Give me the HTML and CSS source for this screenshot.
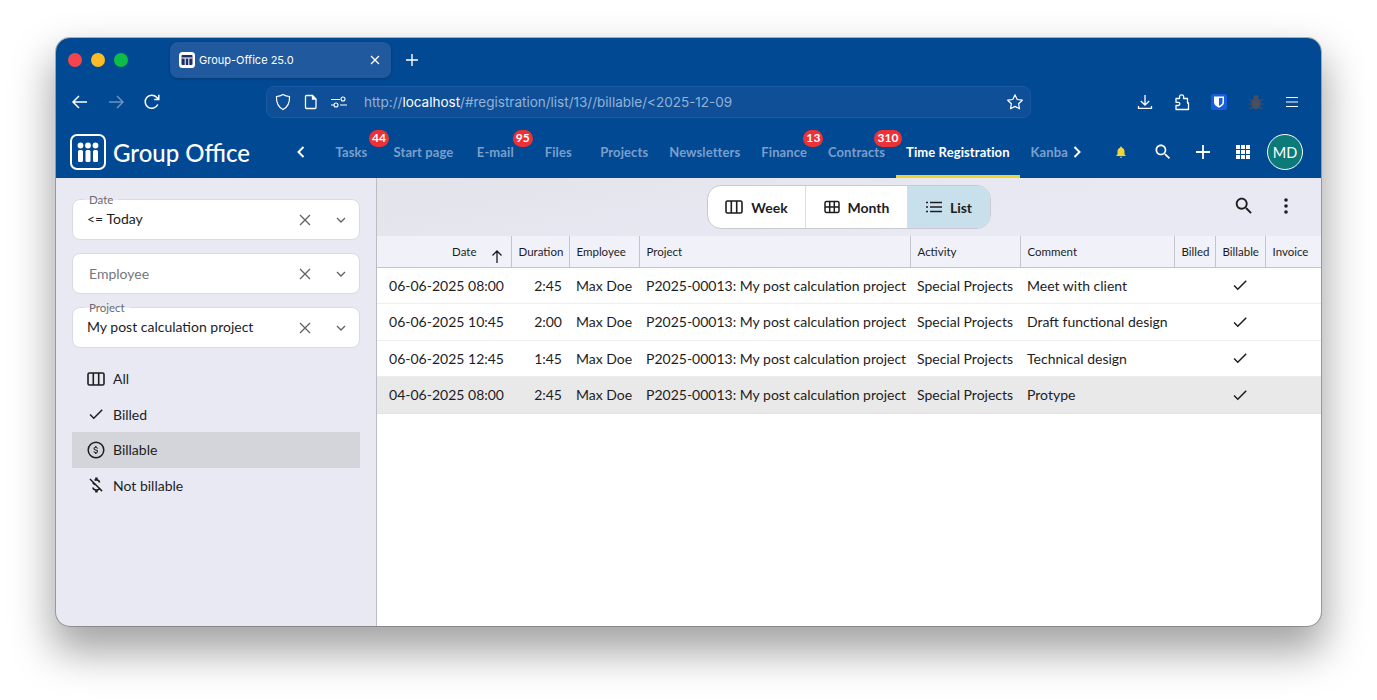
FILE: index.html
```html
<!DOCTYPE html>
<html lang="en">
<head>
  <meta charset="UTF-8" />
  <title>Group-Office 25.0</title>
  <link rel="stylesheet" href="styles.css">
</head>
<body>

<div class="window">

  <!-- browser chrome -->
  <div class="tabbar">
    <div class="lights">
      <span class="light red"></span>
      <span class="light yellow"></span>
      <span class="light green"></span>
    </div>
    <div class="tab">
      <svg class="favicon" width="16" height="16" viewBox="0 0 16 16"><rect width="16" height="16" rx="3.5" fill="#fff"/><rect x="2.5" y="3" width="11" height="10" rx="1" fill="#1c2f6b"/><path d="M2.5 6h11M6.2 6v7M9.8 6v7" stroke="#fff" stroke-width="1"/></svg>
      <span class="tab-title">Group-Office 25.0</span>
      <svg class="tab-close" width="10" height="10" viewBox="0 0 10 10"><path d="M1 1l8 8M9 1l-8 8" stroke="#fff" stroke-width="1.3"/></svg>
    </div>
    <svg class="tab-new" width="14" height="14" viewBox="0 0 14 14"><path d="M7 1v12M1 7h12" stroke="#fff" stroke-width="1.4"/></svg>
  </div>

  <div class="toolbar">
    <div class="toolbar-nav">
      <svg width="18" height="18" viewBox="0 0 18 18" fill="none" stroke="#fff" stroke-width="1.5"><path d="M16 9H2M8 3L2 9l6 6"/></svg>
      <svg class="dimmed" width="18" height="18" viewBox="0 0 18 18" fill="none" stroke="#fff" stroke-width="1.5"><path d="M2 9h14M10 3l6 6-6 6"/></svg>
      <svg width="18" height="18" viewBox="0 0 18 18" fill="none" stroke="#fff" stroke-width="1.5"><path d="M14.8 11.5A6.6 6.6 0 1 1 13.6 4.2l1.9 1.9M15.8 1.8v4.6h-4.6"/></svg>
    </div>
    <div class="urlbar">
      <svg width="16" height="18" viewBox="0 0 16 18" fill="none" stroke="#fff" stroke-width="1.2"><path d="M8 1.5c2 1.2 4 1.8 6.5 2 .3 6-1.5 10.500-6.500 13C3 14 1.200 9.500 1.500 3.500c2.500-.2 4.500-.8 6.500-2z"/></svg>
      <svg width="14" height="16" viewBox="0 0 14 16" fill="none" stroke="#fff" stroke-width="1.3"><path d="M2.500 1.500h6l3.500 3.500v8.500a1 1 0 0 1-1 1h-8.500a1 1 0 0 1-1-1v-11a1 1 0 0 1 1-1z"/><path d="M8.500 1.500v3.500h3.500" fill="#fff"/></svg>
      <svg width="16" height="12" viewBox="0 0 16 12" fill="none" stroke="#fff" stroke-width="1.100"><path d="M0 3.500h9M0 9h3M9 9h7"/><circle cx="12" cy="3" r="2"/><circle cx="5" cy="9" r="2"/></svg>
      <span class="url">http://<b>localhost</b>/#registration/list/13//billable/&lt;2025-12-09</span>
      <svg class="star" width="18" height="18" viewBox="0 0 18 18" fill="none" stroke="#fff" stroke-width="1.200"><path d="M9 1.800l2.200 4.700 5.100.7-3.700 3.500.9 5.100L9 13.400l-4.500 2.400.9-5.100-3.700-3.500 5.100-.7z" stroke-linejoin="round"/></svg>
    </div>
    <div class="toolbar-actions">
      <svg width="16" height="16" viewBox="0 0 16 16" fill="none" stroke="#fff" stroke-width="1.300"><path d="M8 1v10M3.800 7L8 11l4.200-4M1.500 12v2.300h13V12"/></svg>
      <svg width="16" height="18" viewBox="0 0 16 18" fill="none" stroke="#fff" stroke-width="1.300"><path d="M2 5.500h3.500c.3-1 0-1.500 0-2 .2-2.300 4-2.300 4.200 0 0 .6-.3 1-.1 2H13.500v4.500h1v6.500H2v-4h2.500c1.800-.3 1.800-3 0-3.200H2z" stroke-linejoin="round"/></svg>
      <svg width="16" height="16" viewBox="0 0 16 16"><rect width="16" height="16" rx="2" fill="#175ddc"/><path d="M3 2.500h10v6c0 2.500-2.500 4-5 5.300-2.500-1.300-5-2.800-5-5.300z" fill="#fff"/><path d="M8 4v8c1.800-1 3.500-2 3.500-3.700V4z" fill="#175ddc"/></svg>
      <svg width="16" height="16" viewBox="0 0 16 16"><ellipse cx="8" cy="9.500" rx="4.500" ry="5.500" fill="#4a4f5c"/><circle cx="8" cy="3.500" r="2.500" fill="#4a4f5c"/><path d="M1 5l3 2M15 5l-3 2M.500 10h3M15.500 10h-3M1.500 15l3-2M14.500 15l-3-2" stroke="#4a4f5c" stroke-width="1.200"/></svg>
      <svg width="14" height="12" viewBox="0 0 14 12"><path d="M1 1.500h12M1 6h12M1 10.500h12" stroke="#fff" stroke-width="1.200"/></svg>
    </div>
  </div>

  <!-- app header -->
  <header class="appbar">
    <div class="brand">
      <svg class="logo" width="36" height="36" viewBox="0 0 36 36">
        <rect x="1" y="1" width="34" height="34" rx="6" fill="none" stroke="#fff" stroke-width="2"/>
        <circle cx="10.500" cy="11.500" r="2.900" fill="#fff"/><circle cx="18" cy="11.500" r="2.900" fill="#fff"/><circle cx="25.500" cy="11.500" r="2.900" fill="#fff"/>
        <rect x="8" y="16" width="5" height="12" rx="1.500" fill="#fff"/><rect x="15.500" y="16" width="5" height="12" rx="1.500" fill="#fff"/><rect x="23" y="16" width="5" height="12" rx="1.500" fill="#fff"/>
      </svg>
      <span class="brand-name">Group Office</span>
    </div>
    <button class="nav-arrow"><svg width="10" height="12" viewBox="0 0 10 12" fill="none" stroke="#fff" stroke-width="2"><path d="M7.500 1L2.500 6l5 5"/></svg></button>
    <nav class="apps">
      <a class="app">Tasks<span class="badge">44</span></a>
      <a class="app">Start page</a>
      <a class="app">E-mail<span class="badge">95</span></a>
      <a class="app">Files</a>
      <a class="app">Projects</a>
      <a class="app">Newsletters</a>
      <a class="app">Finance<span class="badge">13</span></a>
      <a class="app">Contracts<span class="badge">310</span></a>
      <a class="app active">Time Registration</a>
      <a class="app">Kanban</a>
    </nav>
    <button class="nav-arrow"><svg width="10" height="12" viewBox="0 0 10 12" fill="none" stroke="#fff" stroke-width="2"><path d="M2.500 1l5 5-5 5"/></svg></button>
    <div class="appbar-actions">
      <button class="icon-btn bell"><svg width="14" height="14" viewBox="0 0 24 24" fill="#f0d636"><path d="M12 22c1.100 0 2-.9 2-2h-4c0 1.100.89 2 2 2zm6-6v-5c0-3.070-1.640-5.640-4.500-6.320V4c0-.83-.67-1.500-1.500-1.500s-1.500.67-1.500 1.500v.68C7.630 5.360 6 7.920 6 11v5l-2 2v1h16v-1l-2-2z"/></svg></button>
      <button class="icon-btn"><svg width="20" height="20" viewBox="0 0 24 24" fill="#fff"><path d="M15.500 14h-.79l-.28-.27C15.410 12.590 16 11.110 16 9.500 16 5.910 13.090 3 9.500 3S3 5.910 3 9.500 5.910 16 9.500 16c1.610 0 3.090-.59 4.230-1.570l.27.28v.79l5 4.990L20.490 19l-4.990-5zm-6 0C7.010 14 5 11.990 5 9.500S7.010 5 9.500 5 14 7.010 14 9.500 11.990 14 9.500 14z"/></svg></button>
      <button class="icon-btn"><svg width="14" height="14" viewBox="0 0 14 14"><path d="M7 0v14M0 7h14" stroke="#fff" stroke-width="1.800"/></svg></button>
      <button class="icon-btn"><svg width="14" height="14" viewBox="0 0 14 14" fill="#fff"><rect width="4" height="4"/><rect x="5" width="4" height="4"/><rect x="10" width="4" height="4"/><rect y="5" width="4" height="4"/><rect x="5" y="5" width="4" height="4"/><rect x="10" y="5" width="4" height="4"/><rect y="10" width="4" height="4"/><rect x="5" y="10" width="4" height="4"/><rect x="10" y="10" width="4" height="4"/></svg></button>
      <span class="avatar">MD</span>
    </div>
  </header>

  <div class="content">

    <aside class="sidebar">
      <div class="field has-value">
        <label>Date</label>
        <span class="field-value">&lt;= Today</span>
        <svg class="field-clear" width="12" height="12" viewBox="0 0 12 12"><path d="M1 1l10 10M11 1L1 11" stroke="#5f6166" stroke-width="1.300"/></svg>
        <svg class="field-open" width="10" height="6" viewBox="0 0 10 6" fill="none"><path d="M1 1l4 4 4-4" stroke="#5f6166" stroke-width="1.300"/></svg>
      </div>
      <div class="field">
        <span class="field-placeholder">Employee</span>
        <svg class="field-clear" width="12" height="12" viewBox="0 0 12 12"><path d="M1 1l10 10M11 1L1 11" stroke="#5f6166" stroke-width="1.300"/></svg>
        <svg class="field-open" width="10" height="6" viewBox="0 0 10 6" fill="none"><path d="M1 1l4 4 4-4" stroke="#5f6166" stroke-width="1.300"/></svg>
      </div>
      <div class="field has-value">
        <label>Project</label>
        <span class="field-value">My post calculation project</span>
        <svg class="field-clear" width="12" height="12" viewBox="0 0 12 12"><path d="M1 1l10 10M11 1L1 11" stroke="#5f6166" stroke-width="1.300"/></svg>
        <svg class="field-open" width="10" height="6" viewBox="0 0 10 6" fill="none"><path d="M1 1l4 4 4-4" stroke="#5f6166" stroke-width="1.300"/></svg>
      </div>

      <ul class="filters">
        <li>
          <svg width="18" height="18" viewBox="0 0 18 18" fill="none" stroke="#1d1d1f" stroke-width="1.600"><rect x="1" y="3" width="16" height="12" rx="1.500"/><path d="M6.300 3v12M11.700 3v12"/></svg>
          All
        </li>
        <li>
          <svg width="18" height="18" viewBox="0 0 24 24" fill="#1d1d1f"><path d="M9 16.170L4.830 12l-1.420 1.410L9 19 21 7l-1.410-1.410z"/></svg>
          Billed
        </li>
        <li class="selected">
          <svg width="18" height="18" viewBox="0 0 18 18"><circle cx="9" cy="9" r="7.800" fill="none" stroke="#1d1d1f" stroke-width="1.500"/><path transform="translate(3.600 3.600) scale(.45)" fill="#1d1d1f" d="M11.800 10.900c-2.270-.59-3-1.200-3-2.150 0-1.090 1.010-1.850 2.700-1.850 1.780 0 2.440.85 2.500 2.100h2.210c-.07-1.720-1.120-3.300-3.210-3.810V3h-3v2.160c-1.940.42-3.500 1.680-3.500 3.610 0 2.310 1.910 3.460 4.700 4.130 2.500.6 3 1.480 3 2.410 0 .69-.49 1.790-2.700 1.790-2.060 0-2.870-.92-2.980-2.100h-2.200c.12 2.190 1.760 3.420 3.680 3.830V21h3v-2.150c1.950-.37 3.500-1.500 3.500-3.550 0-2.840-2.430-3.810-4.700-4.400z"/></svg>
          Billable
        </li>
        <li>
          <svg width="20" height="20" viewBox="0 0 24 24" fill="#1d1d1f"><path d="M12.500 6.900c1.780 0 2.440.85 2.500 2.100h2.210c-.07-1.720-1.120-3.300-3.210-3.810V3h-3v2.160c-.53.12-1.030.3-1.480.54l1.470 1.470c.41-.17.91-.27 1.510-.27zM5.330 4.060L4.060 5.330 7.500 8.770c0 2.080 1.560 3.210 3.910 3.910l3.510 3.510c-.34.48-1.050.91-2.420.91-2.060 0-2.870-.92-2.980-2.100h-2.200c.12 2.190 1.760 3.420 3.680 3.830V21h3v-2.150c.96-.18 1.820-.55 2.450-1.120l2.220 2.220 1.270-1.270L5.330 4.060z"/></svg>
          Not billable
        </li>
      </ul>
    </aside>

    <main class="main">
      <div class="main-toolbar">
        <div class="segments">
          <button class="segment">
            <svg width="18" height="18" viewBox="0 0 18 18" fill="none" stroke="#1d1d1f" stroke-width="1.600"><rect x="1" y="3" width="16" height="12" rx="1.500"/><path d="M6.300 3v12M11.700 3v12"/></svg>
            Week
          </button>
          <button class="segment">
            <svg width="16" height="16" viewBox="0 0 16 16" fill="none" stroke="#1d1d1f" stroke-width="1.500"><rect x="1" y="2.500" width="14" height="11" rx="1.500"/><path d="M1 8h14M5.700 2.500v11M10.300 2.500v11"/></svg>
            Month
          </button>
          <button class="segment current">
            <svg width="16" height="16" viewBox="0 0 16 16" stroke="#1d1d1f" stroke-width="1.500"><path d="M4 3.500h12M4 8h12M4 12.500h12M0 3.500h2M0 8h2M0 12.500h2"/></svg>
            List
          </button>
        </div>
        <div class="main-actions">
          <button class="icon-btn"><svg width="22" height="22" viewBox="0 0 24 24" fill="#1d1d1f"><path d="M15.500 14h-.79l-.28-.27C15.410 12.590 16 11.110 16 9.500 16 5.910 13.090 3 9.500 3S3 5.910 3 9.500 5.910 16 9.500 16c1.610 0 3.090-.59 4.230-1.570l.27.28v.79l5 4.990L20.490 19l-4.990-5zm-6 0C7.010 14 5 11.990 5 9.500S7.010 5 9.500 5 14 7.010 14 9.500 11.990 14 9.500 14z"/></svg></button>
          <button class="icon-btn"><svg width="4" height="16" viewBox="0 0 4 16" fill="#1d1d1f"><circle cx="2" cy="2" r="1.800"/><circle cx="2" cy="8" r="1.800"/><circle cx="2" cy="14" r="1.800"/></svg></button>
        </div>
      </div>

      <table class="grid">
        <colgroup>
          <col class="c-date"><col class="c-duration"><col class="c-employee"><col class="c-project"><col class="c-activity"><col class="c-comment"><col class="c-billed"><col class="c-billable"><col class="c-invoice">
        </colgroup>
        <thead>
          <tr>
            <th class="right sorted">Date<svg width="12" height="14" viewBox="0 0 12 14" fill="none" stroke="#1d1d1f" stroke-width="1.300"><path d="M6 14V2M1.500 6.500L6 2l4.500 4.500"/></svg></th>
            <th class="right">Duration</th>
            <th>Employee</th>
            <th>Project</th>
            <th>Activity</th>
            <th>Comment</th>
            <th>Billed</th>
            <th>Billable</th>
            <th>Invoice</th>
          </tr>
        </thead>
        <tbody id="rows"></tbody>
      </table>
    </main>

  </div>
</div>

<script>
const entries = [
  ["06-06-2025 08:00", "2:45", "Meet with client"],
  ["06-06-2025 10:45", "2:00", "Draft functional design"],
  ["06-06-2025 12:45", "1:45", "Technical design"],
  ["04-06-2025 08:00", "2:45", "Protype"]
];

const check = `<svg width="18" height="18" viewBox="0 0 24 24" fill="#1d1d1f"><path d="M9 16.170L4.830 12l-1.420 1.410L9 19 21 7l-1.410-1.410z"/></svg>`;

document.getElementById("rows").innerHTML = entries.map(([date, duration, comment], i) => `
  <tr class="${i === 3 ? "selected" : ""}">
    <td class="right">${date}</td>
    <td class="right">${duration}</td>
    <td>Max Doe</td>
    <td>P2025-00013: My post calculation project</td>
    <td>Special Projects</td>
    <td>${comment}</td>
    <td></td>
    <td class="center">${check}</td>
    <td></td>
  </tr>
`).join("");
</script>

</body>
</html>
```

FILE: styles.css
```css
html, body {
  height: 700px;
  overflow: hidden;
}
body {
  margin: 0;
  padding: 38px 56px 0;
  box-sizing: border-box;
  background: #fff;
  font-family: 'Lato', sans-serif;
  color: #1d1d1f;
}
button {
  background: none;
  border: none;
  padding: 0;
  font-family: inherit;
  color: inherit;
}
svg {
  display: block;
  flex: none;
}

.window {
  height: 588px;
  border-radius: 14px;
  overflow: hidden;
  display: flex;
  flex-direction: column;
  background: #e8e9f3;
}
body::before {
  content: "";
  position: absolute;
  left: 56px;
  top: 38px;
  width: 1265px;
  height: 588px;
  border-radius: 14px;
  box-shadow: 0 0 0 1px rgba(90,90,90,0.45), 0 22px 42px 4px rgba(0,0,0,0.36);
}

/* browser chrome */
.tabbar {
  height: 44px;
  background: #024994;
  display: flex;
  align-items: flex-start;
  padding: 4px 0 0 12px;
  box-sizing: border-box;
  flex: none;
}
.lights {
  display: flex;
  gap: 9px;
  margin-top: 11px;
  width: 102px;
}
.light {
  width: 14px;
  height: 14px;
  border-radius: 50%;
}
.light.red { background: #f4444e; }
.light.yellow { background: #fdbb25; }
.light.green { background: #0ebc4a; }
.tab {
  width: 221px;
  height: 36px;
  box-sizing: border-box;
  background: #20599d;
  border-radius: 8px;
  box-shadow: 0 1px 3px rgba(0,0,0,0.25);
  display: flex;
  align-items: center;
  padding: 0 11px 0 9px;
  color: #fff;
  font-family: 'Inter', sans-serif;
  font-size: 11px;
}
.tab-title {
  margin-left: 4px;
  flex: 1;
}
.tab-new {
  margin: 11px 0 0 14px;
}

.toolbar {
  height: 44px;
  background: #024994;
  display: flex;
  align-items: center;
  flex: none;
  padding-bottom: 4px;
  box-sizing: border-box;
}
.toolbar-nav {
  display: flex;
  gap: 18px;
  margin-left: 15px;
  width: 195px;
}
.dimmed {
  opacity: 0.4;
}
.urlbar {
  width: 765px;
  height: 32px;
  box-sizing: border-box;
  background: #0e4f98;
  border: 1px solid #1a5aa2;
  border-radius: 8px;
  display: flex;
  align-items: center;
  padding: 0 6px 0 8px;
  gap: 13px;
}
.url {
  flex: 1;
  margin-left: 4px;
  font-family: 'Inter', sans-serif;
  font-size: 13.5px;
  color: #93b2d6;
}
.url b {
  font-weight: 400;
  color: #fff;
}
.toolbar-actions {
  display: flex;
  align-items: center;
  margin-left: 106px;
  gap: 21px;
}

/* app header */
.appbar {
  height: 52px;
  background: #024994;
  display: flex;
  align-items: center;
  padding: 0 18px 0 14px;
  box-sizing: border-box;
  flex: none;
}
.brand {
  display: flex;
  align-items: center;
  gap: 7px;
  width: 222px;
  flex: none;
}
.brand-name {
  color: #fff;
  font-size: 24px;
  font-weight: 500;
}
.nav-arrow {
  width: 18px;
  height: 18px;
  display: flex;
  align-items: center;
  justify-content: center;
  flex: none;
}
.apps {
  display: flex;
  width: 748px;
  height: 100%;
  margin-left: 10px;
  overflow: hidden;
  flex: none;
}
.app {
  position: relative;
  flex: none;
  min-width: 63px;
  box-sizing: border-box;
  padding: 0 10.5px;
  display: flex;
  align-items: center;
  justify-content: center;
  font-size: 13px;
  font-weight: 700;
  letter-spacing: 0.1px;
  color: #7a9fcb;
}
.app.active {
  color: #fff;
  border-bottom: 3px solid #ecd233;
  padding-top: 3px;
}
.badge {
  position: absolute;
  top: 4px;
  right: -6px;
  height: 17px;
  min-width: 20px;
  padding: 0 3px;
  box-sizing: border-box;
  border-radius: 9px;
  background: #ec3237;
  color: #fff;
  font-size: 12px;
  font-weight: 700;
  line-height: 16px;
  text-align: center;
}
.appbar-actions {
  margin-left: auto;
  display: flex;
  align-items: center;
}
.icon-btn {
  width: 40px;
  height: 40px;
  display: flex;
  align-items: center;
  justify-content: center;
}
.appbar-actions .bell {
  margin-right: 2px;
}
.avatar {
  width: 36px;
  height: 36px;
  margin-left: 4px;
  box-sizing: border-box;
  border-radius: 50%;
  border: 1px solid #fff;
  background: #0b7a78;
  color: #fff;
  font-size: 14.5px;
  display: flex;
  align-items: center;
  justify-content: center;
}

/* content */
.content {
  flex: 1;
  display: flex;
  min-height: 0;
}
.sidebar {
  width: 321px;
  flex: none;
  box-sizing: border-box;
  padding: 21px 16px 0;
  background: #e8e9f3;
  border-right: 1px solid #bcbdc4;
}
.field {
  position: relative;
  height: 41px;
  box-sizing: border-box;
  margin-bottom: 13px;
  padding: 0 13px 0 15px;
  background: #fff;
  border: 1px solid #d9dae2;
  border-radius: 8px;
  display: flex;
  align-items: center;
  font-size: 14px;
}
.field label {
  position: absolute;
  top: -7px;
  left: 11px;
  padding: 0 5px;
  font-size: 11.5px;
  line-height: 14px;
  color: #6b6c72;
  background: linear-gradient(#e8e9f3 50%, #fff 50%);
}
.field-value {
  flex: 1;
  margin-top: -2px;
}
.field-placeholder {
  flex: 1;
  margin-left: 1px;
  color: #75767c;
}
.field.has-value {
  padding-left: 14px;
}
.field-clear {
  margin-right: 25px;
}
.filters {
  list-style: none;
  margin: 13px 0 0;
  padding: 0;
  font-size: 14px;
}
.filters li {
  height: 35.5px;
  margin-bottom: 0;
  padding-left: 14px;
  display: flex;
  align-items: center;
  position: relative;
}
.filters li svg {
  width: 20px;
  margin-right: 7px;
}
.filters li.selected {
  background: #d4d5da;
}

.main {
  flex: 1;
  min-width: 0;
  background: #fff;
}
.main-toolbar {
  height: 58px;
  background: linear-gradient(170deg, #e3e4ea, #e8e9f3 70%);
  position: relative;
  display: flex;
  justify-content: center;
  align-items: center;
}
.segments {
  display: flex;
  height: 44px;
  box-sizing: border-box;
  border: 1px solid #c9cad0;
  border-radius: 14px;
  overflow: hidden;
  background: #fff;
}
.segment {
  display: flex;
  align-items: center;
  justify-content: center;
  gap: 8px;
  font-size: 14px;
  font-weight: 700;
  border-right: 1px solid #dcdde2;
}
.segment:nth-child(1) { width: 98px; }
.segment:nth-child(2) { width: 102px; }
.segment:nth-child(3) { width: 82px; }
.segment.current {
  background: #c8e0ec;
  border-right: none;
}
.main-actions {
  position: absolute;
  right: 15px;
  top: 8px;
  display: flex;
  gap: 2px;
}

.grid {
  width: 944px;
  table-layout: fixed;
  border-collapse: collapse;
  font-size: 14px;
}
.c-date { width: 134px; }
.c-duration { width: 58px; }
.c-employee { width: 70px; }
.c-project { width: 271px; }
.c-activity { width: 110px; }
.c-comment { width: 154px; }
.c-billed { width: 41px; }
.c-billable { width: 50px; }
.c-invoice { width: 56px; }
.grid th {
  height: 31px;
  padding: 0 7px;
  box-sizing: border-box;
  background: #f0f1f9;
  border-right: 1px solid #c4c5cc;
  border-bottom: 1px solid #c4c5cc;
  font-size: 11.5px;
  font-weight: 400;
  text-align: left;
  white-space: nowrap;
}
.grid th.sorted {
  padding-right: 34px;
  position: relative;
}
.grid th.sorted svg {
  position: absolute;
  right: 8px;
  top: 13px;
}
.grid td {
  height: 36.5px;
  padding: 0 7px;
  box-sizing: border-box;
  border-bottom: 1px solid #eeeef0;
  white-space: nowrap;
  overflow: hidden;
}
.grid .right { text-align: right; }
.grid td.center svg { margin: 0 auto; }
.grid tr.selected td {
  background: #e9e9e9;
  border-bottom-color: #e2e2e4;
}
```
